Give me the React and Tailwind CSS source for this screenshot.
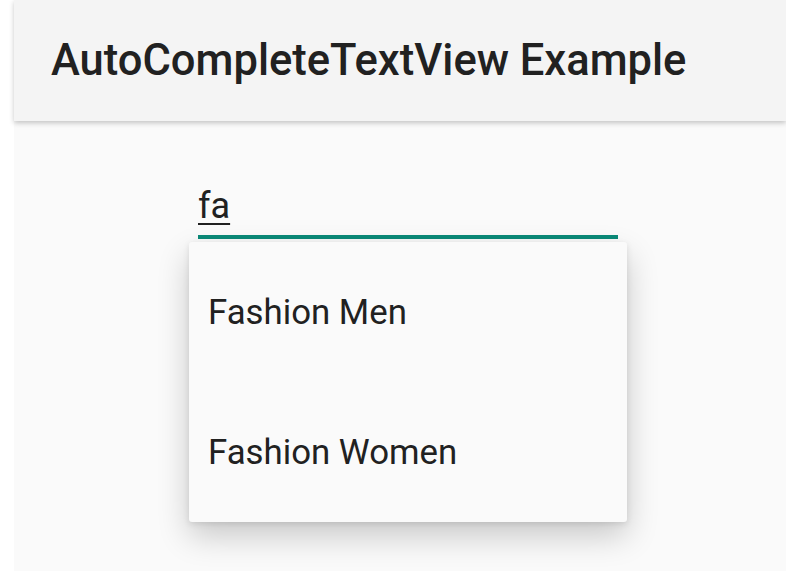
import React from "react";

export default function App() {
  const font = { fontFamily: "Roboto, 'Noto Sans', sans-serif" };
  return (
    <div className="flex min-h-[571px] w-[786px] bg-white overflow-hidden" style={font}>
      <div className="w-[14px] shrink-0 bg-white" />
      <div className="flex flex-1 flex-col bg-[#fafafa]">
        <header className="relative z-10 flex h-[121px] shrink-0 items-center bg-[#f4f4f4] pl-[37px] shadow-[0_2px_5px_rgba(0,0,0,0.22)]">
          <h1 className="text-[43.5px] font-medium leading-none text-[#212121]">
            AutoCompleteTextView Example
          </h1>
        </header>
        <main className="flex flex-col pl-[175px] pt-[65px]">
          <div className="ml-[9px] w-[420px]">
            <div className="h-[40px] text-[36px] leading-[40px] text-[#212121] underline decoration-2 underline-offset-[5px]">
              fa
            </div>
            <div className="mt-[9px] h-[4px] bg-[#0b8a78]" />
          </div>
          <div className="mt-[3px] w-[438px] rounded-[3px] bg-[#fafafa] shadow-[0_14px_32px_rgba(0,0,0,0.2),0_2px_6px_rgba(0,0,0,0.1)]">
            <div className="flex h-[140px] items-center pl-[19px] text-[34.8px] text-[#212121]">
              Fashion Men
            </div>
            <div className="flex h-[140px] items-center pl-[19px] text-[34.8px] text-[#212121]">
              Fashion Women
            </div>
          </div>
        </main>
      </div>
    </div>
  );
}
